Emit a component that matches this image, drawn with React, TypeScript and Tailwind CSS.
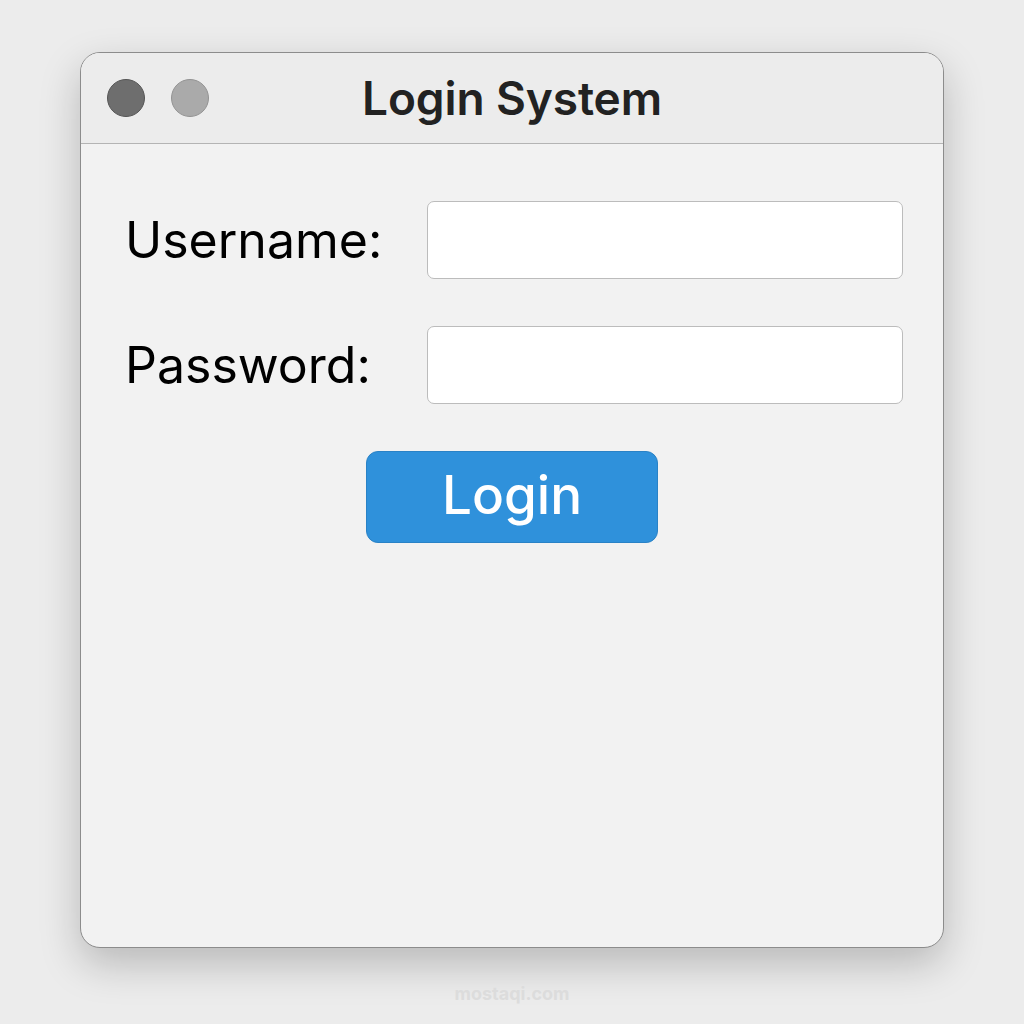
export default function App() {
  return (
    <div className="relative flex h-[1024px] w-[1024px] flex-col items-center bg-[#ececec] pt-[52px] font-['Inter','Liberation_Sans',sans-serif]">
      <div className="flex h-[896px] w-[864px] flex-col overflow-hidden rounded-[20px] border border-[#8c8c8c] bg-[#f2f2f2] shadow-[0_16px_40px_rgba(0,0,0,0.22)]">
        <div className="relative flex h-[91px] shrink-0 items-center border-b border-[#b4b4b4] bg-[#ececec] pl-[26px]">
          <div className="flex gap-[26px]">
            <span className="h-[38px] w-[38px] rounded-full border border-[#555] bg-[#6e6e6e]" />
            <span className="h-[38px] w-[38px] rounded-full border border-[#939393] bg-[#aaaaaa]" />
          </div>
          <h1 className="absolute inset-x-0 text-center text-[46px] font-semibold tracking-[-0.1px] text-[#222]">Login System</h1>
        </div>
        <div className="flex flex-col px-[40px] pt-[57px]">
          <div className="flex items-center">
            <label className="w-[306px] pl-[4px] text-[50px] text-black">Username:</label>
            <input className="h-[78px] w-[477px] rounded-[7px] border border-[#bcbcbc] bg-white" />
          </div>
          <div className="mt-[47px] flex items-center">
            <label className="w-[306px] pl-[4px] text-[50px] text-black">Password:</label>
            <input type="password" className="h-[78px] w-[477px] rounded-[7px] border border-[#bcbcbc] bg-white" />
          </div>
          <div className="mt-[47px] flex justify-center">
            <button className="h-[92px] w-[292px] rounded-[12px] border border-[#2a82c6] bg-[#2f91db] pb-[2px] text-[53px] font-medium text-white">Login</button>
          </div>
        </div>
      </div>
      <span className="mt-[32px] text-[18px] font-bold text-[#dcdcdc]">mostaqi.com</span>
    </div>
  );
}
